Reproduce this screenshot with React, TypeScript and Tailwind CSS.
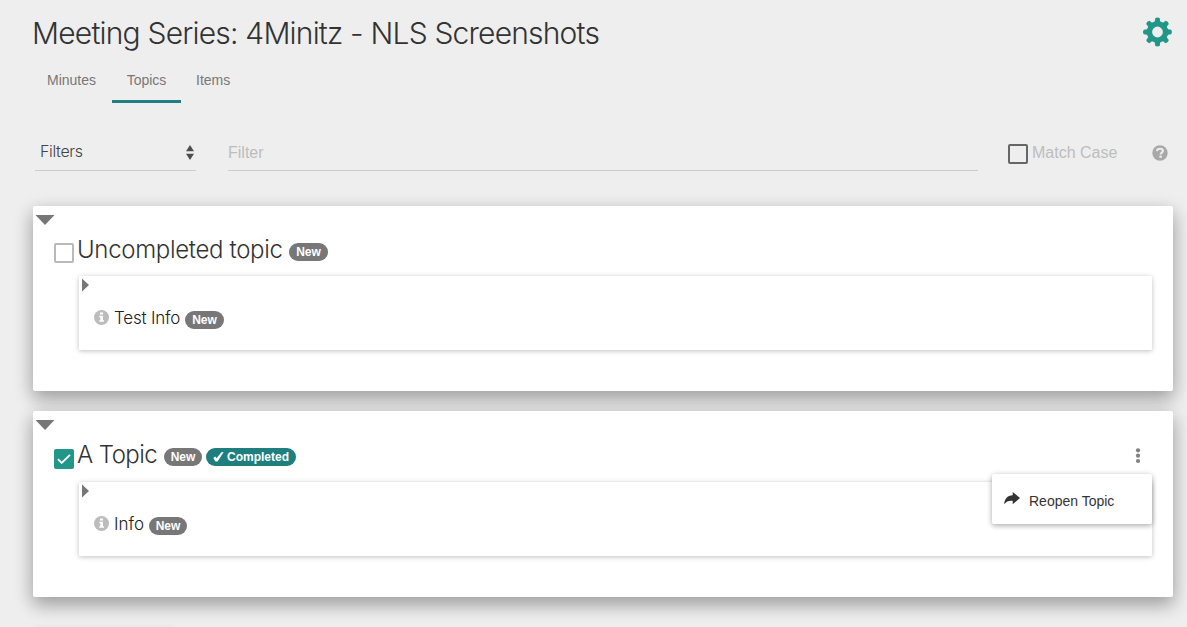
import React from "react";

const light = "font-['Inter','Liberation_Sans',sans-serif] font-light";

function Badge({ children, className = "" }: { children: React.ReactNode; className?: string }) {
  return (
    <span className={`flex h-[18px] shrink-0 items-center justify-center rounded-full text-[12px] leading-none font-bold text-white ${className}`}>
      {children}
    </span>
  );
}

function InfoIcon() {
  return (
    <svg className="-mt-[4px] size-[15px] shrink-0" viewBox="0 0 15 15">
      <circle cx="7.5" cy="7.5" r="7.5" fill="#bcbcbc" />
      <path d="M6 2.5h3v2H6zM5.3 5.8H9v4.5h1v1.5H5.3v-1.5h1V7.3h-1z" fill="#fff" />
    </svg>
  );
}

function InfoPanel({ text, textClass, badgeClass }: { text: string; textClass: string; badgeClass: string }) {
  return (
    <div className="ml-[46px] mr-[21px] h-[74px] rounded-[1px] bg-white pt-[2px] pl-[3px] shadow-[0_1px_6px_rgba(0,0,0,0.12),0_1px_4px_rgba(0,0,0,0.14)]">
      <svg className="h-[14px] w-[7px]" viewBox="0 0 7 14">
        <path d="M0 .5 7 7 0 13.5z" fill="#777" />
      </svg>
      <div className="mt-[17px] flex h-5 items-center pl-3">
        <InfoIcon />
        <span className={`${light} ml-[5px] whitespace-nowrap text-[#222] ${textClass}`}>{text}</span>
        <Badge className={`mt-[2px] bg-[#777] ${badgeClass}`}>New</Badge>
      </div>
    </div>
  );
}

function Collapse() {
  return (
    <svg className="ml-[2px] h-[10px] w-[20px]" viewBox="0 0 20 10">
      <path d="M.5 0h19L10 10z" fill="#777" />
    </svg>
  );
}

const card =
  "relative flex flex-col rounded-[2px] bg-white pt-[9px] shadow-[0_8px_17px_rgba(0,0,0,0.2),0_6px_20px_rgba(0,0,0,0.19)]";

export default function App() {
  return (
    <div className="h-[627px] w-[1187px] overflow-hidden bg-[#eee] pr-[14px] pl-[33px] font-['Liberation_Sans',Arial,sans-serif]">
      <header className="flex h-[65px] items-start justify-between">
        <h1 className={`${light} mt-[13px] -ml-px text-[30px] leading-10 tracking-[-0.8px] whitespace-nowrap text-[#333]`}>
          Meeting Series: 4Minitz - NLS Screenshots
        </h1>
        <svg className="mt-[17px] size-[30px]" viewBox="-14.5 -15 30 30">
          <g fill="#229688">
            {[0, 45, 90, 135, 180, 225, 270, 315].map((a) => (
              <path key={a} transform={`rotate(${a})`} d="M-4.6-8.5-2.7-10.5-2.3-13.7Q0-15.3 2.3-13.7L2.7-10.5 4.6-8.5z" />
            ))}
            <path fillRule="evenodd" d="M-10.7 0a10.7 10.7 0 1 0 21.4 0a10.7 10.7 0 1 0-21.4 0M-5.4 0a5.4 5.4 0 1 0 10.8 0a5.4 5.4 0 1 0-10.8 0" />
          </g>
        </svg>
      </header>

      <nav className="flex h-[38px] text-[14px] leading-[30px] text-[#777]">
        <span className="w-[79px] pl-[14px]">Minutes</span>
        <span className="w-[69px] border-b-[3px] border-[#1f7f83] text-center">Topics</span>
        <span className="pl-[15px]">Items</span>
      </nav>

      <div className="mt-[32px] flex h-9 items-start">
        <div className="ml-[2px] flex h-9 w-[161px] items-center justify-between border-b border-[#ccc] pr-[2px] pl-[5px]">
          <span className={`${light} -mt-[4px] text-[16px] tracking-[-0.35px] text-[#444]`}>Filters</span>
          <svg className="h-[15px] w-[8px]" viewBox="0 0 8 15">
            <path d="M0 6.2 4 0l4 6.2zM0 8.8h8L4 15z" fill="#4d4d4d" />
          </svg>
        </div>
        <div className="ml-8 flex h-9 w-[750px] items-center border-b border-[#ccc] text-[16px] text-[#bdbdbd]">Filter</div>
        <div className="ml-[30px] mt-[9px] size-5 rounded-[2px] border-2 border-[#666]" />
        <span className="mt-[6px] ml-1 text-[16px] text-[#bdbdbd]">Match Case</span>
        <svg className="mt-[10px] ml-auto mr-[5px] size-4" viewBox="0 0 16 16">
          <circle cx="8" cy="8" r="7.7" fill="#a8a8a8" />
          <path d="M5 6.1C5.1 4.5 6.3 3.8 8 3.8c1.8 0 2.9.9 2.9 2.2 0 1.7-2.2 1.6-2.2 3.4" stroke="#eee" strokeWidth="2.1" fill="none" />
          <path d="M7.4 10.6h2.4v2.2H7.4z" fill="#eee" />
        </svg>
      </div>

      <section className={`${card} mt-[35px] h-[185px]`}>
        <Collapse />
        <div className="ml-[21px] flex h-[51px] items-start">
          <div className="mt-[18px] size-5 rounded-[2px] border-2 border-[#b9b9b9]" />
          <span className={`${light} mt-[9px] ml-[3px] w-[205px] text-[24px] leading-8 tracking-[-0.32px] whitespace-nowrap text-[#333]`}>
            Uncompleted topic
          </span>
          <Badge className="mt-[18px] ml-[7px] w-[39px] bg-[#777]">New</Badge>
        </div>
        <InfoPanel text="Test Info" textClass="text-[17px] w-[66px] tracking-[-0.2px]" badgeClass="ml-[5px] w-[39px]" />
      </section>

      <section className={`${card} mt-5 h-[186px]`}>
        <Collapse />
        <div className="ml-[21px] flex h-[52px] items-start">
          <div className="mt-[19px] flex size-5 items-center justify-center rounded-[2px] bg-[#229688]">
            <svg className="h-[11px] w-[14px]" viewBox="0 0 14 11">
              <path d="m1 5.2 3.7 3.7L13 .9" fill="none" stroke="#fff" strokeWidth="1.8" />
            </svg>
          </div>
          <span className={`${light} mt-[9px] ml-[3px] w-[80px] text-[24px] leading-8 tracking-[-0.55px] whitespace-nowrap text-[#333]`}>
            A Topic
          </span>
          <Badge className="mt-[18px] ml-[7px] w-[38px] bg-[#777]">New</Badge>
          <Badge className="mt-[18px] ml-[4px] w-[90px] bg-[#1f7f7f]">
            <svg className="mr-[3px] h-[10px] w-[11px]" viewBox="0 0 11 10">
              <path d="M.3 6 2.2 4.6l1.4 1.7L8.4.2l2.3-.1-6.1 9.4H2.5z" fill="#fff" />
            </svg>
            Completed
          </Badge>
          <svg className="mt-[18px] mr-[32px] ml-auto h-[16px] w-[6px]" viewBox="0 0 6 16">
            <g fill="#808080">
              <circle cx="3" cy="2.3" r="2.1" />
              <circle cx="3" cy="7.7" r="2.1" />
              <circle cx="3" cy="13" r="2.1" />
            </g>
          </svg>
        </div>
        <InfoPanel text="Info" textClass="text-[17px] w-[30px]" badgeClass="ml-[5px] w-[38px]" />
        <div className="absolute top-[63px] right-[21px] flex h-[50px] w-[160px] items-center rounded-[2px] bg-white pl-3 shadow-[0_1px_6px_rgba(0,0,0,0.18),0_2px_5px_rgba(0,0,0,0.18)]">
          <svg className="mb-[1px] h-[13px] w-[16px]" viewBox="0 0 16 13">
            <path d="M8.7 0 16 6 8.7 12.2V8.8C5 8.5 2.2 9.2.2 12.3.4 7 3.2 3.6 8.7 3.3z" fill="#333" />
          </svg>
          <span className="mt-[4px] ml-[9px] text-[14px] whitespace-nowrap text-[#333]">Reopen Topic</span>
        </div>
      </section>

      <div className="mt-8 h-9 w-[142px] rounded-[2px] bg-[#eee] shadow-[0_1px_6px_rgba(0,0,0,0.2)]" />
    </div>
  );
}
